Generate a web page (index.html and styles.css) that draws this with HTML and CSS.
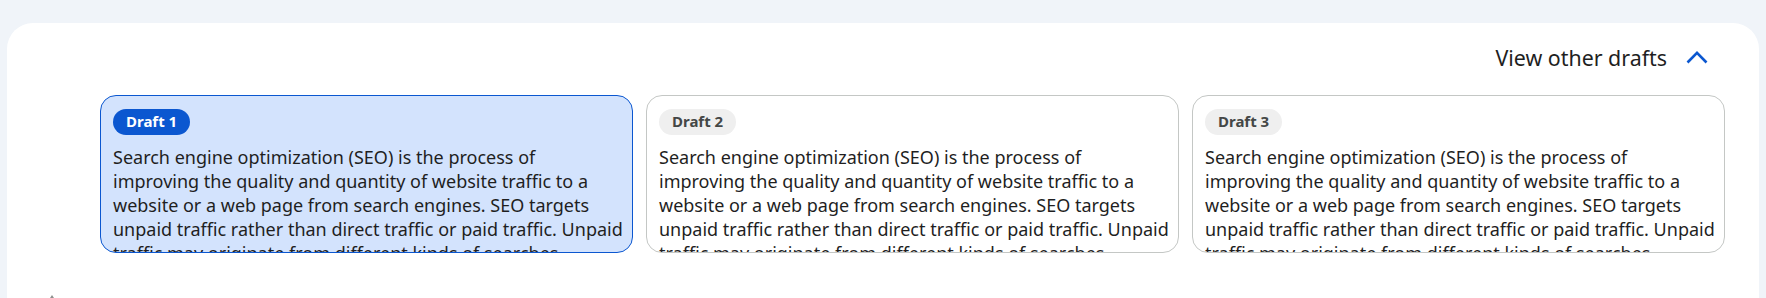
FILE: index.html
```html
<!DOCTYPE html>
<html lang="en">
<head>
<meta charset="utf-8">
<title>Drafts</title>
<link rel="stylesheet" href="styles.css">
</head>
<body>
<main class="panel">
  <div class="header">
    <span class="header-label">View other drafts</span>
    <button class="toggle" aria-label="Collapse drafts">
      <svg width="24" height="24" viewBox="0 0 24 24"><polyline points="2.5,16.5 12,6.8 21.5,16.5" fill="none" stroke="#0b57d0" stroke-width="2.6" stroke-linecap="butt" stroke-linejoin="miter"/></svg>
    </button>
  </div>
  <div class="drafts">
    <div class="draft selected">
      <span class="badge">Draft 1</span>
      <p class="draft-text">Search engine optimization (SEO) is the process of<br>improving the quality and quantity of website traffic to a<br>website or a web page from search engines. SEO targets<br>unpaid traffic rather than direct traffic or paid traffic. Unpaid<br>traffic may originate from different kinds of searches, including image search, video search, academic search, news search, and industry-specific vertical search engines.</p>
    </div>
    <div class="draft">
      <span class="badge">Draft 2</span>
      <p class="draft-text">Search engine optimization (SEO) is the process of<br>improving the quality and quantity of website traffic to a<br>website or a web page from search engines. SEO targets<br>unpaid traffic rather than direct traffic or paid traffic. Unpaid<br>traffic may originate from different kinds of searches, including image search, video search, academic search, news search, and industry-specific vertical search engines.</p>
    </div>
    <div class="draft">
      <span class="badge">Draft 3</span>
      <p class="draft-text">Search engine optimization (SEO) is the process of<br>improving the quality and quantity of website traffic to a<br>website or a web page from search engines. SEO targets<br>unpaid traffic rather than direct traffic or paid traffic. Unpaid<br>traffic may originate from different kinds of searches, including image search, video search, academic search, news search, and industry-specific vertical search engines.</p>
    </div>
  </div>
  <div class="actions">
    <svg class="action-icon" width="18" height="18" viewBox="0 0 18 18"><path d="M9 2 L13 8 L5 8 Z" fill="#8e918f"/></svg>
  </div>
</main>
</body>
</html>
```

FILE: styles.css
```css
* { box-sizing: border-box; }

html, body {
  margin: 0;
  padding: 0;
}

body {
  background: #f0f4f9;
  padding: 23px 7px 0 7px;
  font-family: "Noto Sans", "Open Sans", "Liberation Sans", sans-serif;
  color: #1f1f1f;
  overflow: hidden;
  height: 298px;
}

.panel {
  background: #ffffff;
  border-radius: 26px 26px 0 0;
  padding: 15px 34px 40px 93px;
  min-height: 400px;
}

.header {
  display: flex;
  justify-content: flex-end;
  align-items: center;
  height: 40px;
  padding-right: 8px;
}

.header-label {
  font-size: 21.4px;
  line-height: 24px;
  color: #1f1f1f;
  margin-right: 10px;
}

.toggle {
  width: 40px;
  height: 40px;
  border: 0;
  background: transparent;
  padding: 0;
  display: flex;
  align-items: center;
  justify-content: center;
}

.drafts {
  display: grid;
  grid-template-columns: repeat(3, 533px);
  column-gap: 13px;
  margin-top: 17px;
}

.draft {
  height: 158px;
  border: 1px solid #c4c7c5;
  border-radius: 16px;
  padding: 13px 8px 0 12px;
  overflow: hidden;
  background: #ffffff;
}

.draft.selected {
  background: #d3e3fd;
  border-color: #0b57d0;
}

.badge {
  display: inline-block;
  height: 26px;
  line-height: 24px;
  padding: 0 13px 2px 13px;
  border-radius: 13px;
  font-size: 15px;
  font-weight: 700;
  background: #efefef;
  color: #444746;
  vertical-align: top;
}

.draft.selected .badge {
  background: #0b57d0;
  color: #ffffff;
}

.draft-text {
  margin: 10px 0 0 0;
  font-size: 18px;
  line-height: 24px;
  color: #1f1f1f;
}

.actions {
  display: flex;
  margin-top: 40px;
  margin-left: -57px;
}

.action-icon {
  display: block;
}
```
